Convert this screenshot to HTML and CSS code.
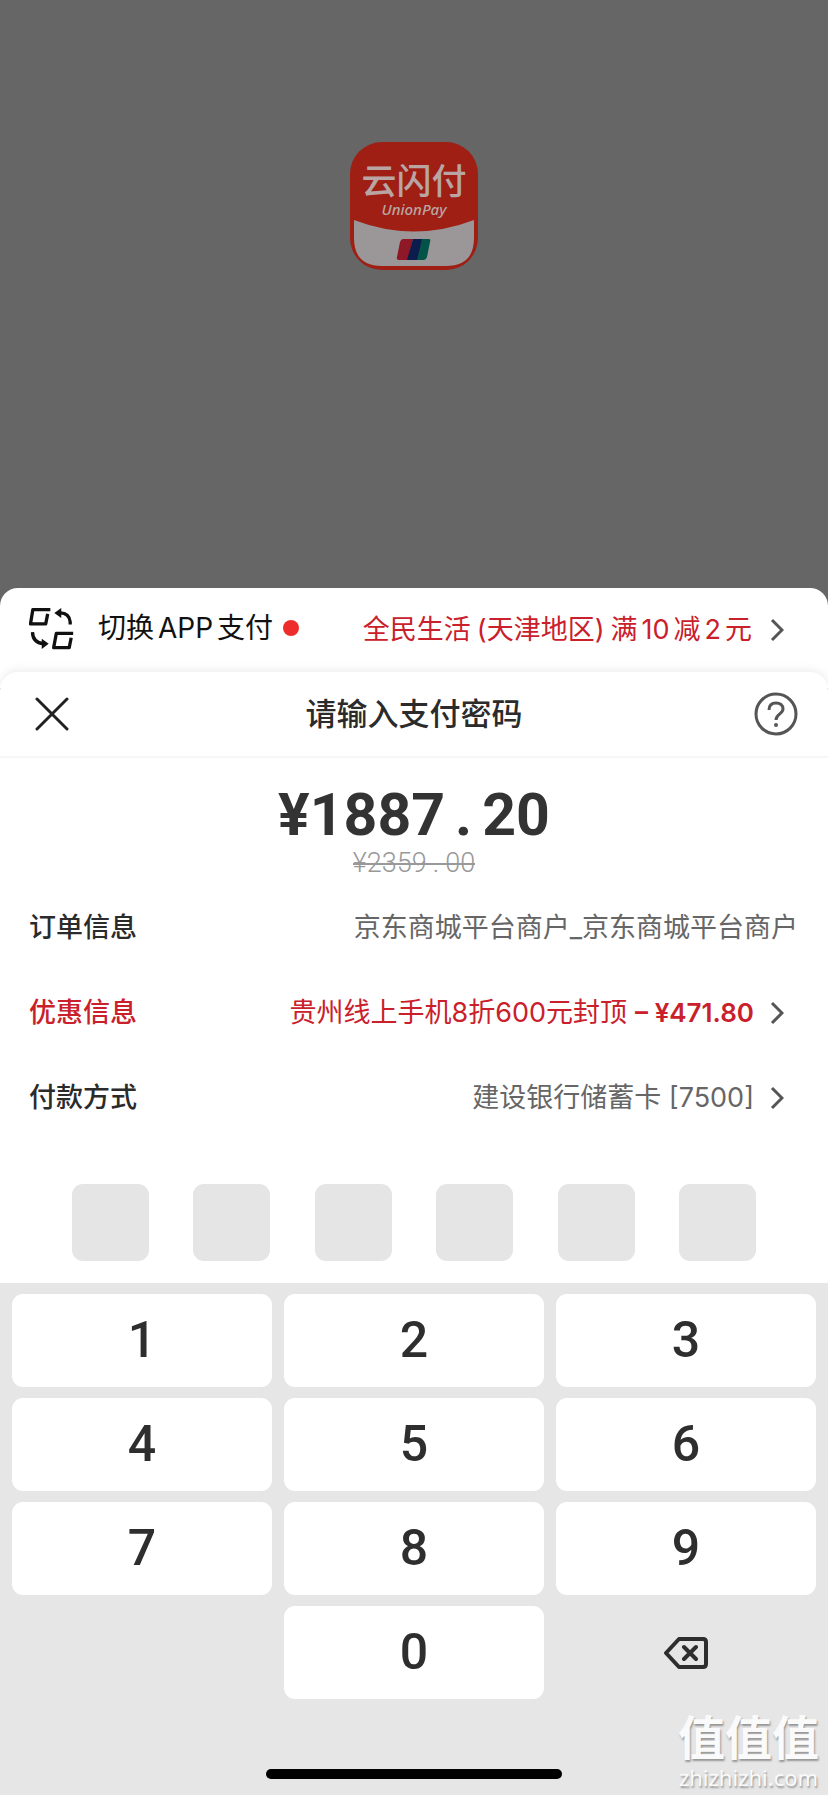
FILE: index.html
```html
<!DOCTYPE html>
<html lang="zh-CN">
<head>
<meta charset="utf-8">
<meta name="viewport" content="width=device-width, initial-scale=1">
<title>请输入支付密码</title>
<link rel="stylesheet" href="styles.css">
</head>
<body>
<div class="backdrop">
  <svg class="logo" viewBox="0 0 128 128" role="img" aria-label="云闪付 UnionPay">
    <rect width="128" height="128" rx="32" fill="#9f1f14"/>
    <path d="M4 78Q64 101 124 78V96Q124 124 96 124H32Q4 124 4 96Z" fill="#9b9798"/>
    <text class="logo-name" x="64" y="52">云闪付</text>
    <text class="logo-latin" x="64" y="73">UnionPay</text>
    <path d="M53 97H63L58 118H49Q46 118 47 115L50 100Q51 97 53 97Z" fill="#8f1826"/>
    <path d="M63 97H73L68 118H57Z" fill="#0c1c4c"/>
    <path d="M72 97H79Q81 97 80 100L77 115Q76 118 74 118H67Z" fill="#045349"/>
  </svg>
</div>

<section class="switch-sheet">
  <a class="switch-link" href="#switch">
    <svg class="switch-icon" viewBox="87 107 135 130" aria-hidden="true">
      <g fill="none" stroke="#111" stroke-width="10" stroke-linejoin="round">
        <path d="M151 115H98L91 158H137L143 128"/>
        <path d="M220 187H169L161 230H208L214 200"/>
        <path d="M211 160V152Q208 126 181 125"/>
        <path d="M97 183Q98 215 130 218"/>
      </g>
      <path d="M163 125L184 110V140ZM146 218L125 203V234Z" fill="#111"/>
    </svg>
    <span class="switch-text">切换<span class="latin">APP</span>支付</span>
    <span class="dot"></span>
  </a>
  <a class="promo" href="#promo">
    <span>全民生活<span class="open">(</span>天津地区<span class="close">)</span>满<span class="latin">10</span>减<span class="latin">2</span>元</span>
    <svg class="chevron" viewBox="0 0 14 24" aria-hidden="true"><path d="M2 2L12 12L2 22"/></svg>
  </a>
</section>

<main class="pay-sheet">
  <header class="pay-header">
    <button class="icon-button" type="button" aria-label="关闭">
      <svg class="close-icon" viewBox="0 0 34 34" aria-hidden="true"><path d="M2 2L32 32M32 2L2 32"/></svg>
    </button>
    <h1>请输入支付密码</h1>
    <button class="icon-button" type="button" aria-label="帮助">
      <svg class="help-icon" viewBox="0 0 44 44" aria-hidden="true">
        <circle cx="22" cy="22" r="20"/>
        <path d="M15 18C15 13 18 11 22 11S29 13 29 17C29 22 22 22 22 28"/>
        <circle class="help-dot" cx="22" cy="33" r="2"/>
      </svg>
    </button>
  </header>

  <div class="amounts">
    <p class="amount">¥1887<span class="point">.</span>20</p>
    <p class="original"><del>¥2359<span class="point">.</span>00</del></p>
  </div>

  <dl class="details">
    <div class="row">
      <dt>订单信息</dt>
      <dd>京东商城平台商户_京东商城平台商户</dd>
    </div>
    <div class="row discount">
      <dt>优惠信息</dt>
      <dd><a href="#discount"><span>贵州线上手机8折600元封顶<b>– ¥471.80</b></span>
        <svg class="chevron" viewBox="0 0 14 24" aria-hidden="true"><path d="M2 2L12 12L2 22"/></svg></a></dd>
    </div>
    <div class="row">
      <dt>付款方式</dt>
      <dd><a href="#method"><span>建设银行储蓄卡 [7500]</span>
        <svg class="chevron" viewBox="0 0 14 24" aria-hidden="true"><path d="M2 2L12 12L2 22"/></svg></a></dd>
    </div>
  </dl>

  <div class="pin">
    <input type="password" maxlength="1" aria-label="密码第1位">
    <input type="password" maxlength="1" aria-label="密码第2位">
    <input type="password" maxlength="1" aria-label="密码第3位">
    <input type="password" maxlength="1" aria-label="密码第4位">
    <input type="password" maxlength="1" aria-label="密码第5位">
    <input type="password" maxlength="1" aria-label="密码第6位">
  </div>
</main>

<footer class="keyboard">
  <div class="keys">
    <button type="button">1</button>
    <button type="button">2</button>
    <button type="button">3</button>
    <button type="button">4</button>
    <button type="button">5</button>
    <button type="button">6</button>
    <button type="button">7</button>
    <button type="button">8</button>
    <button type="button">9</button>
    <button type="button" class="zero">0</button>
    <button type="button" class="delete" aria-label="删除">
      <svg viewBox="0 0 44 32" aria-hidden="true"><path d="M15 2H39Q42 2 42 5V27Q42 30 39 30H15L2 16ZM20 10L32 22M32 10L20 22"/></svg>
    </button>
  </div>
  <div class="home-bar"></div>
  <div class="watermark">
    <span class="mark-name">值值值</span>
    <span class="mark-site">zhizhizhi.com</span>
  </div>
</footer>
</body>
</html>
```
FILE: styles.css
```css
* {
  box-sizing: border-box;
}

body {
  margin: 0;
  min-height: 100vh;
  display: flex;
  flex-direction: column;
  background: #666;
  color: #2b2b2b;
  font-family: Inter, "Noto Sans CJK SC", sans-serif;
  font-size: 27px;
  line-height: 40px;
}

a {
  color: inherit;
  text-decoration: none;
}

button {
  border: 0;
  padding: 0;
  background: none;
  color: inherit;
  font: inherit;
}

.backdrop {
  flex: 1 0 auto;
  padding: 142px 0 64px;
}

.logo {
  display: block;
  width: 128px;
  height: 128px;
  margin: 0 auto;
}

.logo-name,
.logo-latin {
  fill: #b9a5a3;
  text-anchor: middle;
}

.logo-name {
  font: 500 35px "Noto Sans CJK SC", sans-serif;
}

.logo-latin {
  font: italic 500 15px "Noto Sans", sans-serif;
}

.switch-sheet {
  display: flex;
  align-items: center;
  justify-content: space-between;
  height: 100px;
  margin-bottom: -16px;
  padding: 0 44px 16px 29px;
  border-radius: 18px 18px 0 0;
  background: #fff;
}

.switch-link,
.promo,
.details a {
  display: flex;
  align-items: center;
}

.switch-link {
  margin-bottom: 4px;
}

.switch-icon {
  width: 45px;
  height: 43px;
  margin-right: 24px;
}

.switch-text {
  color: #111;
  font-size: 28px;
}

.latin {
  margin: 0 4px;
}

.open {
  margin-left: 6px;
}

.close {
  margin-right: 6px;
}

.dot {
  width: 16px;
  height: 16px;
  margin-left: 10px;
  border-radius: 50%;
  background: #ee2c2c;
}

.promo {
  color: #c9202b;
}

.chevron {
  flex: none;
  width: 14px;
  height: 24px;
  margin-left: 18px;
  fill: none;
  stroke: #555;
  stroke-width: 3;
}

.pay-sheet {
  border-radius: 18px 18px 0 0;
  background: #fff;
  box-shadow: 0 -2px 10px rgba(0, 0, 0, 0.08);
}

.pay-header {
  display: flex;
  align-items: center;
  justify-content: space-between;
  height: 86px;
  padding: 0 30px;
  border-bottom: 2px solid #f6f6f6;
}

.pay-header h1 {
  margin: 0;
  font-size: 31px;
  font-weight: 500;
}

.icon-button {
  display: flex;
  align-items: center;
  justify-content: center;
  width: 44px;
  height: 44px;
}

.close-icon {
  width: 34px;
  height: 34px;
  stroke: #222;
  stroke-width: 3;
  stroke-linecap: round;
}

.help-icon {
  width: 44px;
  height: 44px;
  fill: none;
  stroke: #555;
  stroke-width: 3;
}

.help-icon .help-dot {
  fill: #555;
  stroke: none;
}

.amounts {
  padding-top: 27px;
  font-family: Roboto, "Noto Sans CJK SC", sans-serif;
  text-align: center;
}

.amounts p {
  margin: 0;
}

.amount {
  color: #333;
  font-size: 59px;
  font-weight: 700;
  line-height: 60px;
}

.original {
  color: #999;
  font-size: 27px;
  font-weight: 300;
  line-height: 36px;
}

.original del {
  position: relative;
  text-decoration: none;
}

.original del::after {
  content: "";
  position: absolute;
  inset: 50% 0 auto;
  border-top: 2px solid #999;
}

.point {
  padding: 0 10px;
}

.original .point {
  padding: 0 6px;
}

.details {
  margin: 0;
  padding: 4px 30px 0 29px;
}

.row {
  display: flex;
  align-items: center;
  justify-content: space-between;
  height: 85px;
}

dt {
  font-weight: 500;
}

dd {
  margin: 0;
  color: #666;
}

.details a {
  margin-right: 14px;
}

.details .chevron {
  margin-left: 16px;
}

.discount dt,
.discount dd {
  color: #c9202b;
}

.discount b {
  margin-left: 8px;
  font-size: 26px;
  font-weight: 600;
}

.pin {
  display: flex;
  justify-content: space-between;
  padding: 44px 72px 22px;
}

.pin input {
  width: 77px;
  height: 77px;
  border: 0;
  border-radius: 11px;
  background: #e5e5e5;
  font-size: 40px;
  text-align: center;
}

.keyboard {
  position: relative;
  padding: 11px 12px 16px;
  background: #e6e6e6;
}

.keys {
  display: grid;
  grid-template-columns: repeat(3, 1fr);
  grid-auto-rows: 93px;
  gap: 11px 12px;
}

.keys button {
  border-radius: 11px;
  background: #fff;
  color: #2e2e2e;
  font: 500 50px/93px Roboto, sans-serif;
}

.keys .zero {
  grid-column: 2;
}

.keys .delete {
  display: flex;
  align-items: center;
  justify-content: center;
  background: none;
}

.delete svg {
  width: 44px;
  height: 32px;
  fill: none;
  stroke: #2e2e2e;
  stroke-width: 4;
  stroke-linecap: round;
  stroke-linejoin: round;
}

.home-bar {
  width: 296px;
  height: 10px;
  margin: 70px auto 0;
  border-radius: 5px;
  background: #000;
}

.watermark {
  position: absolute;
  right: 9px;
  bottom: 2px;
  display: flex;
  flex-direction: column;
  align-items: center;
  color: #fafafa;
  text-shadow: 1px 2px 2px rgba(0, 0, 0, 0.35);
}

.mark-name {
  font: 700 47px/52px "Noto Sans CJK SC", sans-serif;
}

.mark-site {
  font: 400 22px/32px "Noto Sans", sans-serif;
}
```
